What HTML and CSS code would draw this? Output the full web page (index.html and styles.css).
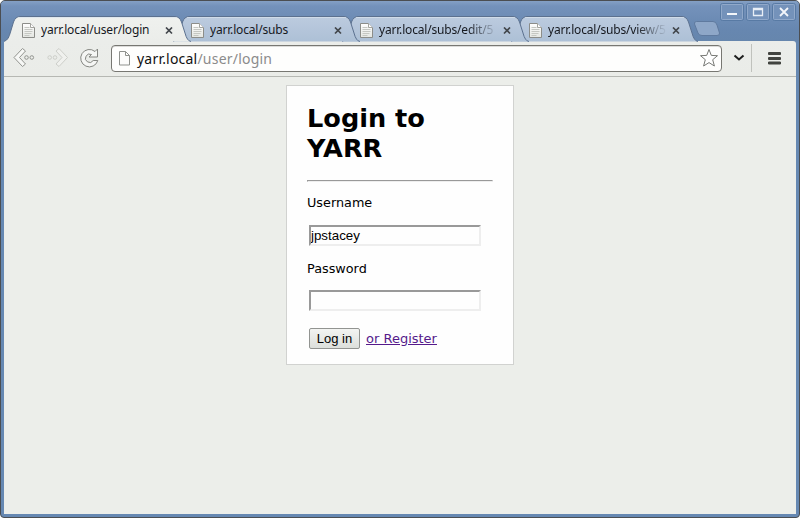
FILE: index.html
```html
<!DOCTYPE html>
<html lang="en">
<head>
<meta charset="utf-8">
<title>Login to YARR</title>
<link rel="stylesheet" href="styles.css">
</head>
<body>
<svg class="defs" width="0" height="0">
  <defs>
    <linearGradient id="paper" x1="0" y1="0" x2="0" y2="1"><stop offset="0" stop-color="#fff"/><stop offset="1" stop-color="#e4e6e1"/></linearGradient>
    <linearGradient id="inactive" x1="0" y1="0" x2="0" y2="1"><stop offset="0" stop-color="#bccbdf"/><stop offset="1" stop-color="#adc0d6"/></linearGradient>
    <linearGradient id="active" x1="0" y1="0" x2="0" y2="1"><stop offset="0" stop-color="#eff1ee"/><stop offset="1" stop-color="#ebedea"/></linearGradient>
    <symbol id="page" viewBox="0 0 14 17"><path d="M.5 1.500h8l4 4v10H.5z" fill="url(#paper)" stroke="#8c8d89"/><path d="M8.500 1.500v4h4" fill="#fff" stroke="#a3a49f"/><path d="M2.500 5.500h5M2.500 7.500h8M2.500 9.500h8M2.500 11.500h7M2.500 13.500h5" stroke="#c5c7c2"/></symbol>
    <symbol id="tab" viewBox="0 0 190 26"><path d="M0 25.500C4 24 5 21 6.500 16L9.500 6Q11.500.5 16 .5H171Q175.500.5 177.500 6L181 17Q183 25 187 25.500" stroke="#5c718f"/><path d="M14 1.500H173" stroke="#d9e2ed" opacity=".7"/></symbol>
    <symbol id="close" viewBox="0 0 8 8"><path d="M1 .5l6 6M7 .5l-6 6" stroke="#42464b" stroke-width="1.700"/></symbol>
  </defs>
</svg>
<div class="window">
  <header class="titlebar">
    <nav class="tabs">
      <div class="tab active"><svg class="shape"><use href="#tab"/></svg><svg class="page"><use href="#page"/></svg><span class="label">yarr.local/user/login</span><svg class="close"><use href="#close"/></svg></div>
      <div class="tab"><svg class="shape"><use href="#tab"/></svg><svg class="page"><use href="#page"/></svg><span class="label">yarr.local/subs</span><svg class="close"><use href="#close"/></svg></div>
      <div class="tab"><svg class="shape"><use href="#tab"/></svg><svg class="page"><use href="#page"/></svg><span class="label fade">yarr.local/subs/edit/5</span><svg class="close"><use href="#close"/></svg></div>
      <div class="tab"><svg class="shape"><use href="#tab"/></svg><svg class="page"><use href="#page"/></svg><span class="label fade">yarr.local/subs/view/5</span><svg class="close"><use href="#close"/></svg></div>
      <svg class="newtab" viewBox="0 0 28 16"><path d="M3.500.5H20Q23 .5 24 4L26.500 12Q27 14.500 24 14.500H9Q6 14.500 5 12L1.500 3Q1 .5 3.500.5z" fill="#8ea7c8" stroke="#5f7a9f"/></svg>
    </nav>
    <div class="controls">
      <svg viewBox="0 0 24 18"><rect class="ring" x=".5" y=".5" width="23" height="17" rx="2"/><rect class="edge" x="1.500" y="1.500" width="21" height="15" rx="1"/><path d="M7 11h10" stroke="#f3f6fa" stroke-width="2"/></svg>
      <svg viewBox="0 0 24 18"><rect class="ring" x=".5" y=".5" width="23" height="17" rx="2"/><rect class="edge" x="1.500" y="1.500" width="21" height="15" rx="1"/><path d="M7.500 5.500h9v7h-9zM8 6.500h8" fill="none" stroke="#e8eef6" stroke-width="1.300"/></svg>
      <svg viewBox="0 0 24 18"><rect class="ring" x=".5" y=".5" width="23" height="17" rx="2"/><rect class="edge" x="1.500" y="1.500" width="21" height="15" rx="1"/><path d="M8 5l8 8M16 5l-8 8" stroke="#f3f6fa" stroke-width="1.800"/></svg>
    </div>
  </header>
  <div class="toolbar">
    <svg class="back" viewBox="0 0 24 22"><g fill="none" stroke="#92948f"><path d="M9.500 1.500L1 10.500l8.500 9 3-2.500-6-6.500 6-6.500z" fill="#f7f8f6"/><circle cx="13.500" cy="10.500" r="1.800"/><circle cx="18.800" cy="10.500" r="1.800"/></g></svg>
    <svg class="forward" viewBox="0 0 24 22"><g fill="none" stroke="#cdcfca"><path d="M13 1.500L21.500 10.500l-8.500 9-3-2.500 6-6.500-6-6.500z" fill="#f0f1ee"/><circle cx="9" cy="10.500" r="1.800"/><circle cx="3.700" cy="10.500" r="1.800"/></g></svg>
    <svg class="reload" viewBox="0 0 22 22"><path d="M17 4.500l2.500-2.500v8h-8.500l2.500-2.500A4.200 4.200 0 1 0 15.200 13.500H19.800A8.700 8.700 0 1 1 17 4.500z" fill="#f5f6f4" stroke="#858782" stroke-linejoin="round"/></svg>
    <div class="address">
      <svg class="doc" viewBox="0 0 14 17"><path d="M1.500 1.500h6l4 4v9.500h-10zM7.500 1.500v4h4" fill="#fcfcfb" stroke="#8f918d"/></svg>
      <span class="url"><b>yarr.local</b>/user/login</span>
      <svg class="star" viewBox="0 0 20 20"><path d="M10 1.500l2.300 5.900 6.200.3-4.800 4 1.700 6.300L10 14.600 4.600 18l1.700-6.300-4.800-4 6.200-.3z" fill="#fff" stroke="#777975" stroke-linejoin="round"/></svg>
    </div>
    <svg class="chevron" viewBox="0 0 12 8"><path d="M1.500 1.500L6 5.500l4.500-4" fill="none" stroke="#1e1f1e" stroke-width="2"/></svg>
    <i class="divider"></i>
    <svg class="menu" viewBox="0 0 13 14"><path d="M1 2.500h11M1 7.500h11M1 12h11" stroke="#41433f" stroke-width="2.800" stroke-linecap="round"/></svg>
  </div>
  <main class="page-body">
    <form class="login">
      <h1>Login to YARR</h1>
      <hr>
      <label for="user">Username</label>
      <input id="user" type="text" value="jpstacey">
      <label for="pass">Password</label>
      <input id="pass" type="password">
      <div class="actions"><button type="button">Log in</button><a href="#">or Register</a></div>
    </form>
  </main>
</div>
</body>
</html>
```
FILE: styles.css
```css
* { box-sizing: border-box; }
body { margin: 0; background: #fff; overflow: hidden; }
svg { display: block; flex: none; }
.defs { position: absolute; }

.window {
  width: 800px;
  height: 518px;
  display: flex;
  flex-direction: column;
  padding: 0 3px 3px;
  border: 1px solid #4b4e52;
  border-radius: 5px 5px 4px 4px;
  background: #6688b2;
}

.titlebar {
  height: 40px;
  flex: none;
  display: flex;
  justify-content: space-between;
  margin: 0 -3px;
  border-radius: 4px 4px 0 0;
  background: linear-gradient(#84a0c5 0, #7492bb 5px, #6787b0 28px, #6686ad);
}
.tabs { display: flex; padding: 15px 0 0 3px; }
.tab {
  position: relative;
  width: 169px;
  height: 26px;
  flex: none;
  display: flex;
  align-items: center;
  padding: 3px 0 0 18px;
  z-index: 3;
}
.tab:nth-child(2) { z-index: 2; }
.tab:nth-child(3) { z-index: 1; }
.tab:nth-child(4) { z-index: 0; }
.tab.active { z-index: 4; }
.shape { position: absolute; left: 0; top: 0; width: 190px; height: 26px; fill: url(#inactive); }
.active .shape { fill: url(#active); }
.page { position: relative; width: 14px; height: 17px; }
.label {
  position: relative;
  width: 120px;
  margin: -1px 0 0 5px;
  overflow: hidden;
  white-space: nowrap;
  font: 12px/18px "Noto Sans", sans-serif;
  letter-spacing: -0.18px;
  color: #16191f;
}
.fade { -webkit-mask-image: linear-gradient(90deg, #000 88px, transparent 119px); mask-image: linear-gradient(90deg, #000 88px, transparent 119px); }
.close { position: relative; width: 8px; height: 8px; margin-left: 6px; }
.newtab { width: 28px; height: 16px; margin: 5px -3px 0 13px; }

.controls { display: flex; gap: 2px; padding: 2px 3px 0 0; }
.controls svg { width: 24px; height: 18px; }
.edge { fill: #7492ba; stroke: #91a9ca; }
.ring { fill: none; stroke: #587aa4; }

.toolbar {
  height: 36px;
  flex: none;
  display: flex;
  align-items: center;
  padding: 0 11px 1px 9px;
  background: linear-gradient(#ebedea, #eaece8);
  border-bottom: 1px solid #b6b8b3;
  border-top-right-radius: 3px;
}
.back { width: 24px; height: 22px; }
.forward { width: 24px; height: 22px; margin-left: 9px; }
.reload { width: 22px; height: 22px; margin-left: 8px; }
.address {
  display: flex;
  align-items: center;
  width: 611px;
  height: 27px;
  margin-left: 11px;
  padding: 0 2px 0 6px;
  border: 1px solid #777772;
  border-radius: 4px;
  background: #fefefd;
  box-shadow: inset 0 1px #dcdcda;
}
.doc { width: 14px; height: 17px; }
.url {
  flex: 1;
  margin-left: 5px;
  padding-top: 1px;
  font: 14px/20px "Noto Sans", sans-serif;
  letter-spacing: 0.21px;
  color: #8b8b8b;
}
.url b { font-weight: 400; color: #111; }
.star { width: 20px; height: 20px; }
.chevron { width: 12px; height: 8px; margin-left: 11px; }
.divider { width: 1px; height: 28px; margin-left: 6px; background: #c0c2bd; }
.menu { width: 13px; height: 14px; margin-left: 16px; }

.page-body {
  flex: 1;
  padding-top: 8px;
  background: #eceeea;
  font: 12.8px/15px "DejaVu Sans", sans-serif;
  color: #000;
}
.login {
  width: 228px;
  height: 280px;
  margin: 0 auto;
  padding: 17px 20px 0;
  border: 1px solid #d1d2d0;
  background: #fefefe;
}
h1 { margin: 0; font: bold 25.6px/30px "DejaVu Sans", sans-serif; }
hr { height: 2px; margin: 17px 0 13px; border: 1px solid; border-color: #999 #eee #eee #999; }
label { display: block; }
input {
  display: block;
  width: 172px;
  height: 21px;
  margin: 15px 0 15px 2px;
  padding: 0;
  border: 2px solid;
  border-color: #999 #eee #eee #999;
  background: #fefefe;
  color: #000;
  font: 13.33px/17px "Liberation Sans", sans-serif;
}
#pass { margin-top: 14px; }
.actions { display: flex; align-items: center; margin: 17px 0 0 2px; }
button {
  width: 51px;
  height: 21px;
  padding: 0;
  border: 1px solid #929491;
  border-radius: 2px;
  background: linear-gradient(#f3f4f2, #dcdfdb);
  color: #000;
  font: 13px/17px "Liberation Sans", sans-serif;
}
a { margin-left: 6px; font-size: 13px; color: #551a8b; }
```
